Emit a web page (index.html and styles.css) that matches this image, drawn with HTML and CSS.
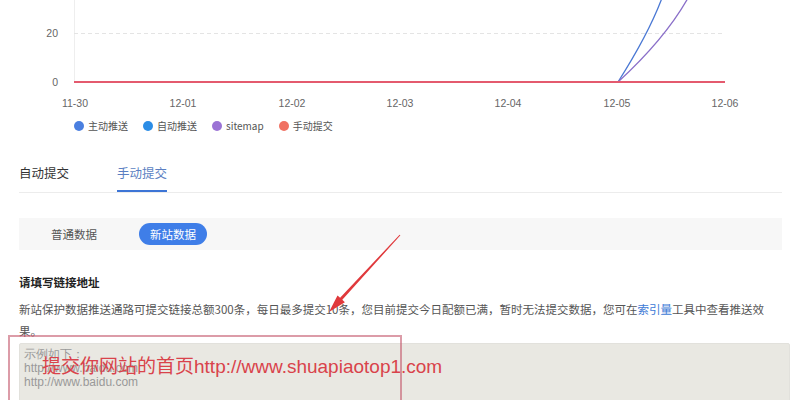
FILE: index.html
```html
<!DOCTYPE html>
<html>
  <head>
    <meta charset="utf-8">
    <link rel="stylesheet" href="styles.css">
  </head>

  <body>
    <div class="page">
      <svg class="chart" width="801" height="112" viewBox="0 0 801 112">
        <line x1="74.5" y1="0" x2="74.5" y2="82" stroke="#eeeeee" />
        <line x1="74" y1="33.5" x2="725" y2="33.5" stroke="#e4e4e4" stroke-dasharray="4 3" />
        <text class="axis" x="58" y="37" text-anchor="end">20</text>
        <text class="axis" x="58" y="86" text-anchor="end">0</text>
        <path d="M618 82 C632 60 650 30 662 -2" fill="none" stroke="#4a78d4" stroke-width="1.3" />
        <path d="M618 82 C642 60 670 30 688 -2" fill="none" stroke="#8a6fc9" stroke-width="1.3" />
        <line x1="74" y1="82" x2="725" y2="82" stroke="#e45a6e" stroke-width="2" />
        <text class="axis" x="75" y="107" text-anchor="middle">11-30</text>
        <text class="axis" x="183" y="107" text-anchor="middle">12-01</text>
        <text class="axis" x="292" y="107" text-anchor="middle">12-02</text>
        <text class="axis" x="400" y="107" text-anchor="middle">12-03</text>
        <text class="axis" x="508" y="107" text-anchor="middle">12-04</text>
        <text class="axis" x="617" y="107" text-anchor="middle">12-05</text>
        <text class="axis" x="725" y="107" text-anchor="middle">12-06</text>
      </svg>

      <ul class="legend">
        <li><span class="dot dot-active"></span>主动推送</li>
        <li><span class="dot dot-auto"></span>自动推送</li>
        <li><span class="dot dot-sitemap"></span>sitemap</li>
        <li><span class="dot dot-manual"></span>手动提交</li>
      </ul>

      <div class="content">
        <div class="tabs">
          <span class="tab">自动提交</span>
          <span class="tab tab-active">手动提交</span>
        </div>

        <div class="filter-bar">
          <span class="filter">普通数据</span>
          <span class="filter filter-active">新站数据</span>
        </div>

        <h3 class="section-title">请填写链接地址</h3>
        <p class="notice">
          新站保护数据推送通路可提交链接总额300条，每日最多提交10条，您目前提交今日配额已满，暂时无法提交数据，您可在<a href="#">索引量</a>工具中查看推送效果。
        </p>

        <textarea class="url-input" placeholder="示例如下：&#10;http://www.baidu.com&#10;http://www.baidu.com"></textarea>
      </div>

      <!-- annotation drawn over the screenshot -->
      <div class="note-box"></div>
      <div class="note-text">提交你网站的首页http://www.shuapiaotop1.com</div>
      <svg class="note-arrow" width="801" height="400" viewBox="0 0 801 400">
        <polygon
          points="400.4,235.3 342.3,299.8 344.9,302.2 329,312 337.5,295.4 340.1,297.8 399.6,234.7"
          fill="#e0393c"
        />
      </svg>
    </div>
  </body>
</html>
```

FILE: styles.css
```css
body {
  margin: 0;
  font-family: "Noto Sans CJK SC", "Liberation Sans", sans-serif;
  color: #555;
  background: #fff;
}

.page {
  position: relative;
  width: 801px;
  height: 400px;
  overflow: hidden;
}

.chart {
  display: block;
}

.axis {
  font-family: "Liberation Sans", sans-serif;
  font-size: 10.5px;
  fill: #666;
}

.legend {
  list-style: none;
  margin: 0;
  padding: 0 0 0 74px;
  display: flex;
  gap: 15px;
  height: 27px;
  align-items: center;
  font-size: 10px;
  color: #555;
}

.legend li {
  display: flex;
  align-items: center;
  gap: 4px;
}

.dot {
  width: 10px;
  height: 10px;
  border-radius: 50%;
}

.dot-active {
  background-color: #4a7fe0;
}

.dot-auto {
  background-color: #2b8de6;
}

.dot-sitemap {
  background-color: #9b73d5;
}

.dot-manual {
  background-color: #f07162;
}

.content {
  padding-left: 19px;
  width: 763px;
}

.tabs {
  display: flex;
  gap: 48px;
  margin-top: 16px;
  border-bottom: 1px solid #ececec;
}

.tab {
  font-size: 12.5px;
  line-height: 20px;
  padding: 8px 0 7px;
  border-bottom: 2px solid transparent;
  color: #333;
}

.tab-active {
  color: #5b7fc2;
  border-bottom-color: #3d75d6;
}

.filter-bar {
  margin-top: 25px;
  height: 32px;
  background-color: #f7f7f7;
  display: flex;
  align-items: center;
  gap: 31px;
  padding-left: 21px;
}

.filter {
  font-size: 11.5px;
  line-height: 22px;
  padding: 0 11px;
  border-radius: 11px;
  color: #555;
}

.filter-active {
  background-color: #3f7ee8;
  color: #fff;
}

.section-title {
  margin: 22px 0 0;
  font-size: 11.5px;
  line-height: 20px;
  font-weight: bold;
  color: #222;
}

.notice {
  margin: 6px 0 0;
  font-size: 11.5px;
  line-height: 22px;
  color: #555;
}

.notice a {
  color: #3d7ad6;
  text-decoration: none;
}

.url-input {
  display: block;
  box-sizing: border-box;
  margin-top: 1px;
  width: 771px;
  height: 90px;
  padding: 3px 4px;
  border: 1px solid #e2e1dc;
  border-radius: 2px;
  background-color: #e9e8e2;
  font-family: "Liberation Sans", sans-serif;
  font-size: 12px;
  line-height: 14px;
  resize: none;
}

.url-input::placeholder {
  color: #999;
}

.note-box {
  position: absolute;
  left: 8px;
  top: 335px;
  width: 390px;
  height: 80px;
  border: 2px solid rgba(196, 90, 110, 0.6);
}

.note-text {
  position: absolute;
  left: 42px;
  top: 355px;
  font-family: "Liberation Sans", "Noto Sans CJK SC", sans-serif;
  font-size: 19px;
  line-height: 24px;
  color: #d9434b;
  white-space: nowrap;
}

.note-arrow {
  position: absolute;
  left: 0;
  top: 0;
}
```
